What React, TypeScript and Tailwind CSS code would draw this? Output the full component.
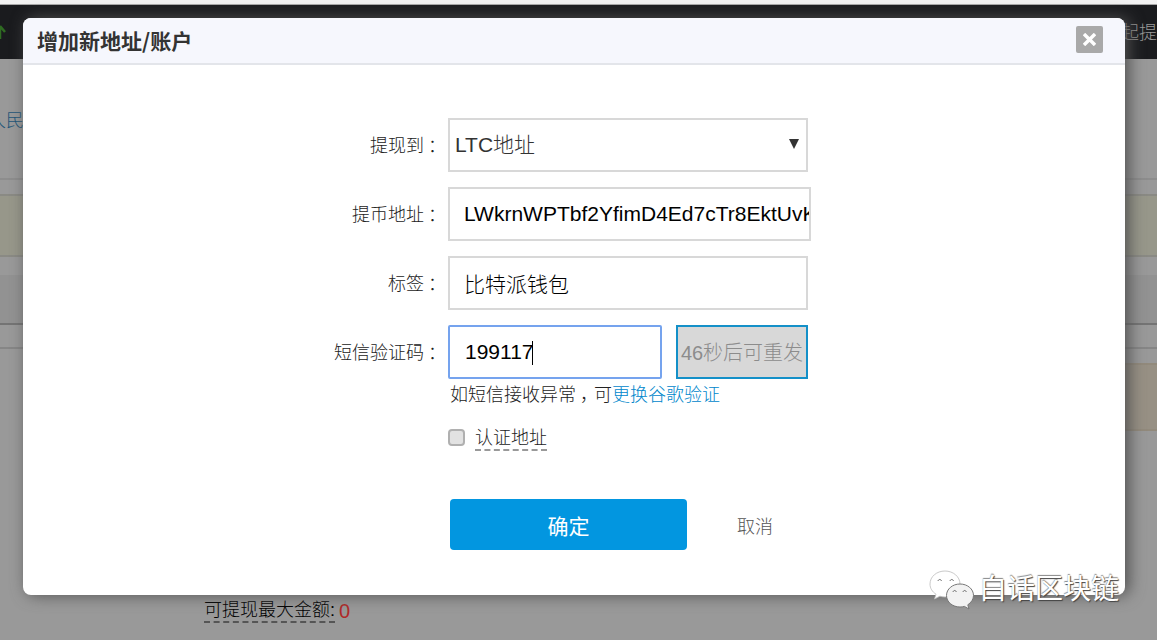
import { useState } from "react"

const fieldClass =
  "block h-[54px] border-2 border-[#d8d8d8] bg-white text-[21px] text-black outline-none"

// full-width punctuation, centred in its cell
const Punct = ({ children }: { children: string }) => <span className="inline-block w-[18px] pl-1">{children}</span>

const Label = ({ htmlFor, children }: { htmlFor: string; children: string }) => (
  <label htmlFor={htmlFor} className="pt-0.5 text-right text-[18px] text-[#222]">
    {children}
    <Punct>：</Punct>
  </label>
)

const PageBehind = () => (
  <div>
    <div className="h-[5px] border-b border-[#a8a8a8] bg-[#f2f2f2]" />
    <header className="flex h-[54px] items-center justify-between bg-[#1a1b1e] text-[18px] text-[#999]">
      <svg width="6" height="16" viewBox="0 0 6 16" fill="none" stroke="#2f6b22" strokeWidth="2.5">
        <path d="M0 15V2M0 2L5 8" />
      </svg>
      <span className="pt-0.5">起提</span>
    </header>
    <nav className="flex h-[121px] items-center border-b-2 border-[#8d8d8d] pt-1.5 text-[18px] text-[#1d5578]">
      <a href="#cny" className="-ml-3">
        人民
      </a>
    </nav>
    <div className="mt-3.5 h-[63px] border-y-2 border-[#8a8a84] bg-[#97978a]" />
    <div className="mt-[18px] h-[50px] border-b-2 border-[#747474] bg-[#929292]" />
    <div className="h-6 border-b-2 border-[#868686]" />
    <div className="mt-3.5 flex h-[68px] justify-end">
      <div className="w-1/2 border-y-2 border-[#928a7c] bg-[#979084]" />
    </div>
    <p className="mt-[168px] ml-[204px] flex items-start gap-1 text-[18px] leading-6 text-black">
      <span className="border-b-2 border-dashed border-[#555] leading-[22px]">可提现最大金额:</span>
      <span className="text-[20px] text-[#b02a2a]">0</span>
    </p>
  </div>
)

const Watermark = () => (
  <div className="absolute right-[38px] bottom-[30px] flex items-center gap-1 text-[28px] leading-10 font-normal text-white [text-shadow:1px_1px_1px_#444,0_-1px_1px_#888]">
    <svg width="46" height="40" viewBox="0 0 46 40" fill="none">
      <path
        d="M16 1C7.700 1 1 6.600 1 14c0 4.300 2.300 7.800 6 10.200L5.500 29l5.400-2.800c1.700.5 3.300.8 5.100.8 8.300 0 15-5.800 15-13S24.300 1 16 1z"
        fill="#fff"
        stroke="#bbb"
        strokeWidth="0.8"
      />
      <path
        d="M31 14c-7.500 0-13.500 5-13.500 11.500S23.500 37 31 37c1.500 0 3-.2 4.400-.6L40 39l-1.200-4.200c3.500-2.300 5.700-5.600 5.700-9.300C44.500 19 38.500 14 31 14z"
        fill="#f2f2f2"
        stroke="#777"
        strokeWidth="1"
      />
      <path d="M9 11c.5-2 3-2 3.500 0M21 11c.5-2 3-2 3.500 0M24 22c.5-2 2.800-2 3.300 0M34 22c.5-2 2.800-2 3.300 0" stroke="#666" />
    </svg>
    <span>白话区块链</span>
  </div>
)

export default function App() {
  const [certified, setCertified] = useState(false)

  return (
    <div className="relative min-h-screen overflow-hidden bg-[#999] font-['Liberation_Sans','Noto_Sans_CJK_SC',sans-serif] font-light">
      <PageBehind />

      <div
        role="dialog"
        aria-labelledby="dialog-title"
        className="absolute top-[18px] right-8 left-[23px] rounded-lg bg-white shadow-[4px_0_16px_#505050]"
      >
        <div className="flex h-[47px] items-center justify-between rounded-t-lg border-b-2 border-[#e3e5ea] bg-[#f6f7fd] pr-[22px] pl-3.5">
          <h1 id="dialog-title" className="font-['Noto_Sans_CJK_SC',sans-serif] text-[21px] font-bold text-[#333]">
            增加新地址/账户
          </h1>
          <button
            type="button"
            aria-label="关闭"
            className="mt-2 flex h-[27px] w-[27px] items-center justify-center self-start rounded-xs bg-[#a9a9a9]"
          >
            <svg width="13" height="13" viewBox="0 0 13 13" stroke="#fff" strokeWidth="3.4">
              <path d="M1 1L12 12M12 1L1 12" />
            </svg>
          </button>
        </div>

        <form className="pt-[53px] pb-[45px]" onSubmit={(e) => e.preventDefault()}>
          <div className="grid grid-cols-[419px_minmax(0,360px)] items-center gap-x-1.5 gap-y-[15px]">
            <Label htmlFor="type">提现到</Label>
            <div className="relative">
              <select
                id="type"
                className="block h-[54px] w-full appearance-none border-2 border-[#d8d8d8] bg-white pl-[5px] text-[21px] text-[#333] outline-none"
              >
                <option>LTC地址</option>
              </select>
              <svg
                className="pointer-events-none absolute top-[21px] right-[9px]"
                width="10"
                height="10"
                viewBox="0 0 10 10"
                fill="#333"
              >
                <path d="M0 0h10L5 10z" />
              </svg>
            </div>

            <Label htmlFor="address">提币地址</Label>
            <input
              id="address"
              className={`${fieldClass} w-[363px] pl-3.5`}
              defaultValue="LWkrnWPTbf2YfimD4Ed7cTr8EktUvK"
            />

            <Label htmlFor="tag">标签</Label>
            <input id="tag" className={`${fieldClass} w-full px-3.5`} defaultValue="比特派钱包" />

            <Label htmlFor="code">短信验证码</Label>
            <div className="flex justify-between">
              <div className="relative">
                <input
                  id="code"
                  className="block h-[54px] w-[214px] rounded-xs border-2 border-[#75a3ee] bg-white px-[15px] text-[21px] text-black outline-none"
                  defaultValue="199117"
                />
                <span className="absolute top-4 left-[84px] h-6 w-px bg-black" />
              </div>
              <button
                type="button"
                disabled
                className="h-[54px] w-[132px] border-2 border-[#1490c8] bg-[#d8d8d8] pt-0.5 text-[20px] whitespace-nowrap text-[#8c8c8c]"
              >
                46秒后可重发
              </button>
            </div>
          </div>

          <div className="ml-[425px]">
            <p className="mt-1 ml-0.5 text-[18px] leading-6 text-[#222]">
              如短信接收异常<Punct>，</Punct>可
              <a href="#google" className="text-[#0087cc]">
                更换谷歌验证
              </a>
            </p>
            <div className="mt-[18px] flex items-start gap-2.5">
              <input
                id="certified"
                type="checkbox"
                checked={certified}
                onChange={(e) => setCertified(e.target.checked)}
                className="mt-1 h-[17px] w-[17px] appearance-none rounded-sm border-2 border-[#b0b0b0] bg-[#e2e2e2] checked:bg-[#1296db]"
              />
              <label
                htmlFor="certified"
                className="border-b-2 border-dashed border-[#999] pt-0.5 text-[18px] leading-[22px] text-[#222]"
              >
                认证地址
              </label>
            </div>
            <div className="mt-12 ml-0.5 flex items-center gap-[50px]">
              <button
                type="submit"
                className="h-[51px] w-[237px] rounded-sm bg-[#0296e0] pt-1 text-[21px] font-normal text-white"
              >
                确定
              </button>
              <button type="button" className="pt-1.5 text-[18px] text-[#555]">
                取消
              </button>
            </div>
          </div>
        </form>
      </div>

      <Watermark />
    </div>
  )
}
